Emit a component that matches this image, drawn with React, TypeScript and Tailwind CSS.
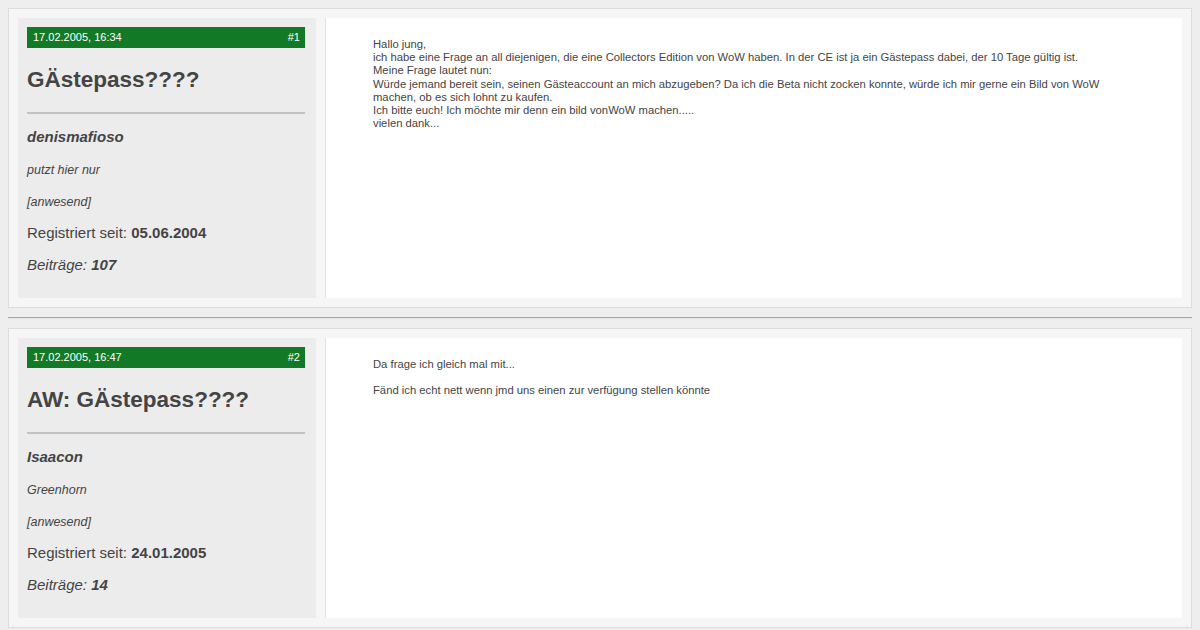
import React from "react";

type Post = {
  date: string;
  num: string;
  title: string;
  user: string;
  rank: string;
  reg: string;
  posts: string;
  body: React.ReactNode;
};

const posts: Post[] = [
  {
    date: "17.02.2005, 16:34",
    num: "#1",
    title: "GÄstepass????",
    user: "denismafioso",
    rank: "putzt hier nur",
    reg: "05.06.2004",
    posts: "107",
    body: (
      <>
        Hallo jung,
        <br />
        ich habe eine Frage an all diejenigen, die eine Collectors Edition von WoW haben. In der CE ist ja ein Gästepass dabei, der 10 Tage gültig ist.
        <br />
        Meine Frage lautet nun:
        <br />
        Würde jemand bereit sein, seinen Gästeaccount an mich abzugeben? Da ich die Beta nicht zocken konnte, würde ich mir gerne ein Bild von WoW machen, ob es sich lohnt zu kaufen.
        <br />
        Ich bitte euch! Ich möchte mir denn ein bild vonWoW machen.....
        <br />
        vielen dank...
      </>
    ),
  },
  {
    date: "17.02.2005, 16:47",
    num: "#2",
    title: "AW: GÄstepass????",
    user: "Isaacon",
    rank: "Greenhorn",
    reg: "24.01.2005",
    posts: "14",
    body: (
      <>
        Da frage ich gleich mal mit...
        <br />
        <br />
        Fänd ich echt nett wenn jmd uns einen zur verfügung stellen könnte
      </>
    ),
  },
];

function PostBox({ p }: { p: Post }) {
  return (
    <div className="mx-2 h-[300px] border border-[#dcdcdc] bg-[#f6f6f6] p-[9px] flex gap-[9px]">
      <div className="w-[298px] shrink-0 bg-[#ececec] pl-[9px] pr-[11px] pt-[9px] text-[#444] flex flex-col">
        <div className="h-[21px] bg-[#127a27] text-white text-[11px] flex items-center justify-between pl-[6px] pr-[5px]">
          <span>{p.date}</span>
          <span>{p.num}</span>
        </div>
        <div className="mt-[18px] text-[22.5px] leading-[28px] font-bold">{p.title}</div>
        <div className="mt-[18px] h-[2px] bg-[#c2c2c2]" />
        <div className="mt-[8px] h-[30px] flex items-center text-[15px] font-bold italic">{p.user}</div>
        <div className="h-[36px] flex items-center text-[12.5px] italic">{p.rank}</div>
        <div className="h-[28px] flex items-center text-[12.5px] italic">[anwesend]</div>
        <div className="h-[34px] flex items-center text-[15px]">
          Registriert seit:&nbsp;<b>{p.reg}</b>
        </div>
        <div className="h-[30px] flex items-center text-[15px] italic">
          Beiträge:&nbsp;<b>{p.posts}</b>
        </div>
      </div>
      <div className="flex-1 bg-white border-l border-[#e2e2e2] pl-[47px] pr-[47px] pt-[20px] text-[11.25px] leading-[13.2px] text-[#444]">
        {p.body}
      </div>
    </div>
  );
}

export default function App() {
  return (
    <div
      className="w-[1200px] h-[630px] overflow-hidden bg-[#eeeeee] pt-2"
      style={{ fontFamily: '"Liberation Sans", Arial, sans-serif' }}
    >
      <PostBox p={posts[0]} />
      <div className="mx-2 my-[9px] border-t border-t-[#a8a8a8] border-b border-b-[#e4e4e4]" />
      <PostBox p={posts[1]} />
    </div>
  );
}
